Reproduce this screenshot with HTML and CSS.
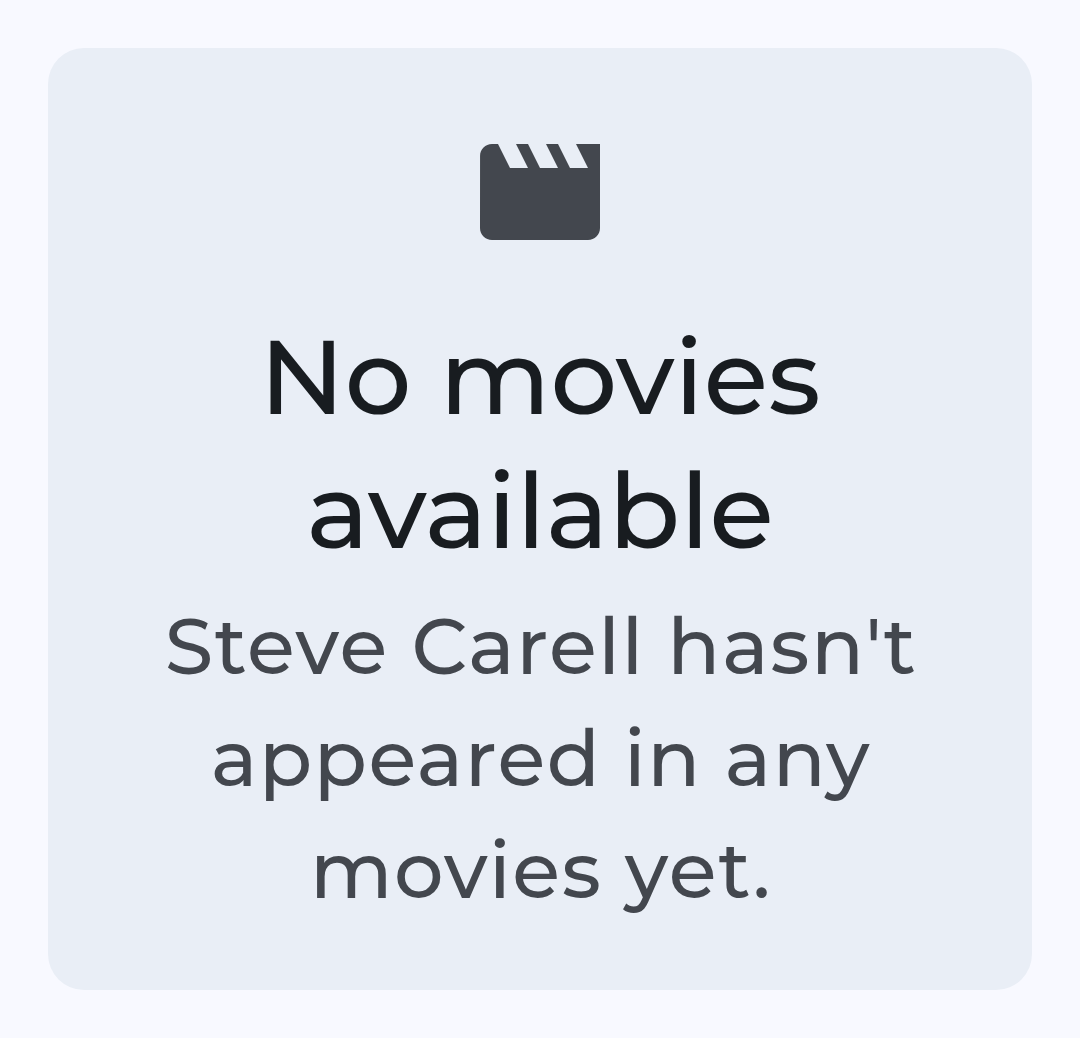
FILE: index.html
```html
<!DOCTYPE html>
<html lang="en">
<head>
<meta charset="utf-8">
<title>No movies available</title>
<link rel="stylesheet" href="styles.css">
</head>
<body>
<main class="card">
  <svg class="icon" viewBox="0 0 24 24" aria-hidden="true"><path d="M18 4l2 4h-3l-2-4h-2l2 4h-3l-2-4H8l2 4H7L5 4H4c-1.100 0-1.990.9-1.990 2L2 18c0 1.100.9 2 2 2h16c1.100 0 2-.9 2-2V4h-4z"/></svg>
  <h1 class="title"><span class="line">No movies</span><span class="line">available</span></h1>
  <p class="text"><span class="line">Steve Carell hasn't</span><span class="line">appeared in any</span><span class="line">movies yet.</span></p>
</main>
</body>
</html>
```

FILE: styles.css
```css
body {
  margin: 0;
  min-height: 1038px;
  box-sizing: border-box;
  padding: 48px;
  background: #f8f9ff;
  font-family: Montserrat, "Open Sans", sans-serif;
}
.card {
  height: 942px;
  box-sizing: border-box;
  padding-top: 72px;
  border-radius: 36px;
  background: #e9eef6;
  display: flex;
  flex-direction: column;
  align-items: center;
}
.icon {
  width: 144px;
  height: 144px;
  fill: #43474e;
}
.title, .text {
  margin: 0;
  font-weight: 500;
  text-align: center;
  white-space: nowrap;
}
.title {
  margin-top: 45px;
  font-size: 105px;
  line-height: 134px;
  color: #181c20;
}
.text {
  margin-top: 13px;
  padding-left: 2px;
  font-size: 78px;
  line-height: 112px;
  letter-spacing: 1.56px;
  color: #43474e;
}
.line {
  display: block;
}
```
